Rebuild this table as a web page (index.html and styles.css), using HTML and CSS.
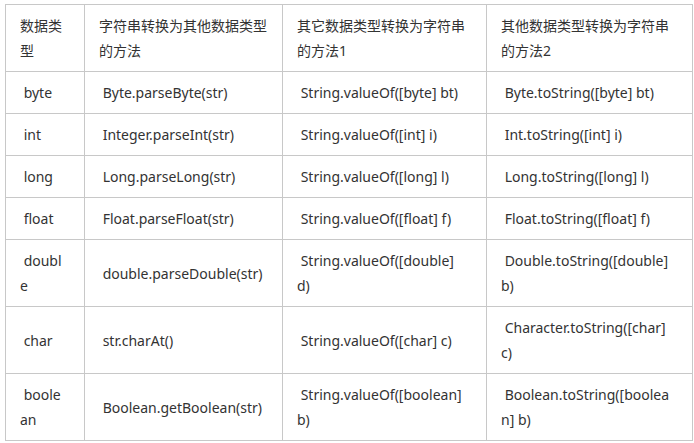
FILE: index.html
```html
<!DOCTYPE html>
<html lang="zh">
<head>
<meta charset="utf-8">
<link rel="stylesheet" href="styles.css">
</head>
<body>
<div class="page">
<table class="types">
<colgroup>
<col class="c1"><col class="c2"><col class="c3"><col class="c4">
</colgroup>
<tbody>
<tr class="head"><td>数据类型</td><td>字符串转换为其他数据类型的方法</td><td>其它数据类型转换为字符串的方法1</td><td>其他数据类型转换为字符串的方法2</td></tr>
<tr><td>&nbsp;byte</td><td>&nbsp;Byte.parseByte(str)</td><td>&nbsp;String.valueOf([byte] bt)</td><td>&nbsp;Byte.toString([byte] bt)</td></tr>
<tr><td>&nbsp;int</td><td>&nbsp;Integer.parseInt(str)</td><td>&nbsp;String.valueOf([int] i)</td><td>&nbsp;Int.toString([int] i)</td></tr>
<tr><td>&nbsp;long</td><td>&nbsp;Long.parseLong(str)</td><td>&nbsp;String.valueOf([long] l)</td><td>&nbsp;Long.toString([long] l)</td></tr>
<tr><td>&nbsp;float</td><td>&nbsp;Float.parseFloat(str)</td><td>&nbsp;String.valueOf([float] f)</td><td>&nbsp;Float.toString([float] f)</td></tr>
<tr><td>&nbsp;double</td><td>&nbsp;double.parseDouble(str)</td><td>&nbsp;String.valueOf([double] d)</td><td>&nbsp;Double.toString([double] b)</td></tr>
<tr><td>&nbsp;char</td><td>&nbsp;str.charAt()</td><td>&nbsp;String.valueOf([char] c)</td><td>&nbsp;Character.toString([char] c)</td></tr>
<tr><td>&nbsp;boolean</td><td>&nbsp;Boolean.getBoolean(str)</td><td>&nbsp;String.valueOf([boolean] b)</td><td>&nbsp;Boolean.toString([boolean] b)</td></tr>
</tbody>
</table>
</div>
</body>
</html>
```
FILE: styles.css
```css
html, body {
  margin: 0;
  padding: 0;
  background: #fff;
}
.page {
  padding: 4px 0 0 5px;
}
.types {
  border-collapse: collapse;
  table-layout: fixed;
  width: 687px;
  font-family: "Noto Sans", "Noto Sans CJK SC", sans-serif;
  font-size: 14px;
  color: #333;
}
.c1 { width: 79px; }
.c2 { width: 198px; }
.c3 { width: 204px; }
.c4 { width: 206px; }
.types td {
  border: 1px solid #c8c8c8;
  padding: 8px 17px 8px 14px;
  line-height: 25px;
  vertical-align: middle;
  word-break: break-all;
  text-align: left;
}
.types .head td {
  padding-right: 14px;
}
```
